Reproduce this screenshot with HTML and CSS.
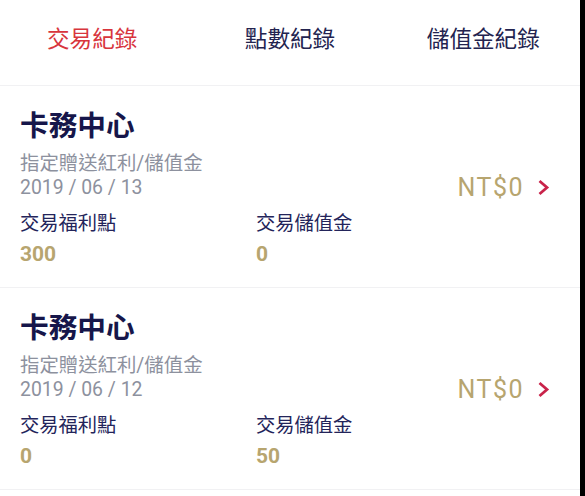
FILE: index.html
```html
<!DOCTYPE html>
<html lang="zh-Hant">
<head>
<meta charset="utf-8">
<title>交易紀錄</title>
<link rel="stylesheet" href="styles.css">
</head>
<body>
<div class="app">
  <nav class="tabs">
    <div class="tab active">交易紀錄</div>
    <div class="tab">點數紀錄</div>
    <div class="tab">儲值金紀錄</div>
  </nav>
  <ul class="list">
    <li class="card">
      <div class="info">
        <div class="title">卡務中心</div>
        <div class="sub">指定贈送紅利/儲值金</div>
        <div class="date">2019 / 06 / 13</div>
        <div class="stats">
          <div class="stat">
            <div class="label">交易福利點</div>
            <div class="value">300</div>
          </div>
          <div class="stat">
            <div class="label">交易儲值金</div>
            <div class="value">0</div>
          </div>
        </div>
      </div>
      <div class="amount">
        <span class="money">NT$0</span>
        <svg class="chev" width="13" height="17" viewBox="0 0 13 17"><path d="M2.5 2 L10 8.5 L2.5 15" fill="none" stroke="#c9234a" stroke-width="2.8" stroke-linejoin="miter"/></svg>
      </div>
    </li>
    <li class="card">
      <div class="info">
        <div class="title">卡務中心</div>
        <div class="sub">指定贈送紅利/儲值金</div>
        <div class="date">2019 / 06 / 12</div>
        <div class="stats">
          <div class="stat">
            <div class="label">交易福利點</div>
            <div class="value">0</div>
          </div>
          <div class="stat">
            <div class="label">交易儲值金</div>
            <div class="value">50</div>
          </div>
        </div>
      </div>
      <div class="amount">
        <span class="money">NT$0</span>
        <svg class="chev" width="13" height="17" viewBox="0 0 13 17"><path d="M2.5 2 L10 8.5 L2.5 15" fill="none" stroke="#c9234a" stroke-width="2.8" stroke-linejoin="miter"/></svg>
      </div>
    </li>
  </ul>
</div>
</body>
</html>
```
FILE: styles.css
```css
html, body {
  margin: 0;
  padding: 0;
  height: 100%;
  background: #000;
}
body {
  font-family: Roboto, "Noto Sans CJK TC", "Noto Sans", sans-serif;
  overflow: hidden;
}
.app {
  width: 580px;
  height: 100%;
  background: #fff;
}
.tabs {
  display: flex;
  height: 86px;
  align-items: center;
  border-bottom: 1px solid #f1f1f3;
  padding: 0 0 10px 0;
  box-sizing: border-box;
}
.tab {
  flex: none;
  width: 33.333%;
  box-sizing: border-box;
  text-align: center;
  font-size: 22.6px;
  color: #23234f;
}
.tab.active {
  color: #d8353d;
  padding-right: 9px;
}
.list {
  list-style: none;
  margin: 0;
  padding: 0;
}
.card {
  display: flex;
  align-items: center;
  height: 201px;
  padding: 0 30px 0 20px;
  border-bottom: 1px solid #f1f1f3;
}
.info {
  flex: 1;
  min-width: 0;
  padding-top: 2px;
}
.title {
  font-size: 28.7px;
  font-weight: 700;
  line-height: 36px;
  color: #16164a;
}
.sub, .date {
  font-size: 19.4px;
  line-height: 24px;
  color: #8d919e;
}
.sub {
  margin-top: 8px;
}
.stats {
  display: flex;
  margin-top: 10px;
}
.stat:first-child {
  width: 236px;
}
.label {
  font-size: 19.3px;
  line-height: 28px;
  color: #23245a;
}
.value {
  font-size: 21px;
  font-weight: 700;
  line-height: 28px;
  margin-top: 2px;
  color: #b7a56f;
}
.amount {
  display: flex;
  align-items: center;
  gap: 13px;
  margin-top: 2px;
}
.money {
  font-size: 25px;
  letter-spacing: 1.5px;
  color: #b7a56f;
}
.chev {
  display: block;
}
```
